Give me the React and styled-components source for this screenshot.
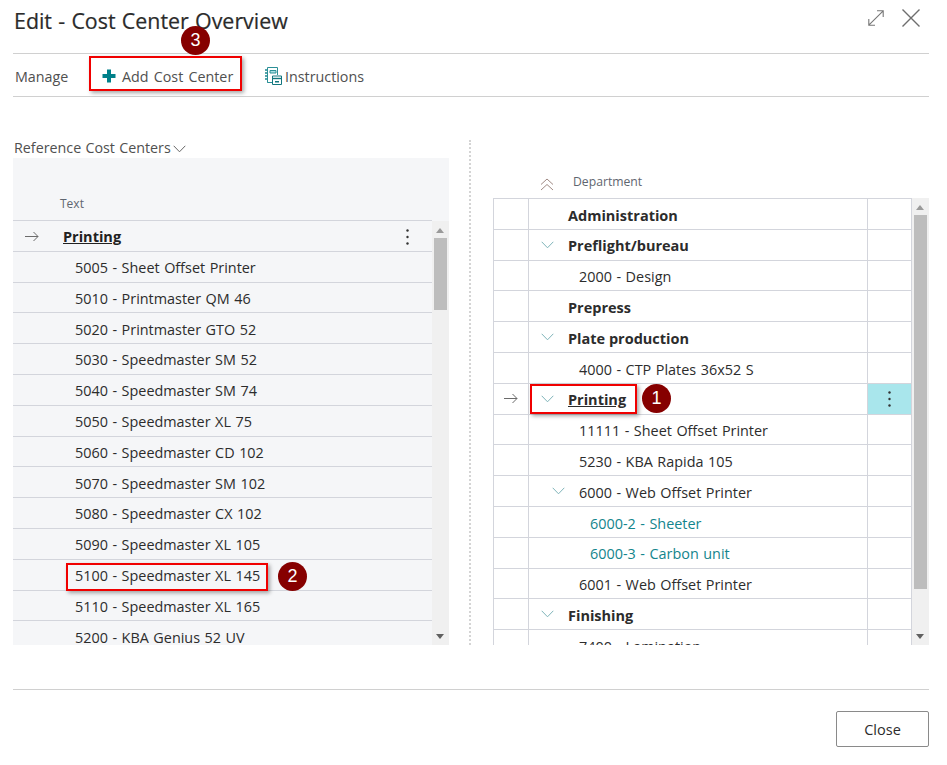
import React from "react";
import styled, { createGlobalStyle } from "styled-components";

const leftRows = [
  "5005 - Sheet Offset Printer",
  "5010 - Printmaster QM 46",
  "5020 - Printmaster GTO 52",
  "5030 - Speedmaster SM 52",
  "5040 - Speedmaster SM 74",
  "5050 - Speedmaster XL 75",
  "5060 - Speedmaster CD 102",
  "5070 - Speedmaster SM 102",
  "5080 - Speedmaster CX 102",
  "5090 - Speedmaster XL 105",
  "5100 - Speedmaster XL 145",
  "5110 - Speedmaster XL 165",
  "5200 - KBA Genius 52 UV",
];

const treeRows = [
  { text: "Administration", level: 0, bold: true },
  { text: "Preflight/bureau", level: 0, bold: true, open: true },
  { text: "2000 - Design", level: 1 },
  { text: "Prepress", level: 0, bold: true },
  { text: "Plate production", level: 0, bold: true, open: true },
  { text: "4000 - CTP Plates 36x52 S", level: 1 },
  { text: "Printing", level: 0, bold: true, open: true, current: true },
  { text: "11111 - Sheet Offset Printer", level: 1 },
  { text: "5230 - KBA Rapida 105", level: 1 },
  { text: "6000 - Web Offset Printer", level: 1, open: true },
  { text: "6000-2 - Sheeter", level: 2, teal: true },
  { text: "6000-3 - Carbon unit", level: 2, teal: true },
  { text: "6001 - Web Offset Printer", level: 1 },
  { text: "Finishing", level: 0, bold: true, open: true },
  { text: "7400 - Lamination", level: 1 },
];

const ChevronDown = ({ color = "#7fb4b9" }) => (
  <svg width="13" height="8" viewBox="0 0 13 8" fill="none">
    <path d="M0.7 0.8 L6.5 6.8 L12.3 0.8" stroke={color} strokeWidth="1" />
  </svg>
);

const DoubleUp = () => (
  <svg width="14" height="13" viewBox="0 0 14 13" fill="none">
    <path d="M1 6.5 L7 1 L13 6.5 M1 12 L7 6.5 L13 12" stroke="#a08a84" strokeWidth="1" />
  </svg>
);

const Arrow = () => (
  <svg width="14" height="11" viewBox="0 0 14 11" fill="none">
    <path d="M0 5.5 H13 M8.5 1 L13 5.5 L8.5 10" stroke="#6b6b6b" strokeWidth="1" />
  </svg>
);

const Kebab = () => (
  <svg width="3" height="16" viewBox="0 0 3 16">
    <circle cx="1.5" cy="1.5" r="1.2" fill="#333" />
    <circle cx="1.5" cy="8" r="1.2" fill="#333" />
    <circle cx="1.5" cy="14.5" r="1.2" fill="#333" />
  </svg>
);

const PlusIcon = () => (
  <svg width="14" height="14" viewBox="0 0 14 14">
    <path d="M5 0.5 H9 V5 H13.5 V9 H9 V13.5 H5 V9 H0.5 V5 H5 Z" fill="#00808a" />
  </svg>
);

const InstructionsIcon = () => (
  <svg width="17" height="18" viewBox="0 0 17 18" fill="none">
    <path d="M2.5 0.5 H12.5 V8 M7 15.5 H2.5 Z M2.5 0.5 V15.5" stroke="#2b8f96" strokeWidth="1" />
    <path d="M1 2 V4 M1 5 V7 M1 8 V10 M1 11 V13" stroke="#2b8f96" strokeWidth="1.6" />
    <path d="M5 3.5 H11 V6 H5 Z" fill="#a9dfe3" stroke="#2b8f96" strokeWidth="1" />
    <path d="M7.5 9 H16.5 V17.5 H7.5 Z" fill="#fff" stroke="#12767e" strokeWidth="1" />
    <path d="M7.5 11.5 H16.5" stroke="#12767e" strokeWidth="1.4" />
    <path d="M10 14 H14 V15.5 H10 Z" fill="#12767e" />
  </svg>
);

const ExpandIcon = () => (
  <svg width="16" height="16" viewBox="0 0 16 16" fill="none">
    <path d="M0.8 15.2 L15.2 0.8 M9 0.8 H15.2 V7 M0.8 9 V15.2 H7" stroke="#777" strokeWidth="1.1" />
  </svg>
);

const CloseIcon = () => (
  <svg width="18" height="18" viewBox="0 0 18 18" fill="none">
    <path d="M0.5 0.5 L17.5 17.5 M17.5 0.5 L0.5 17.5" stroke="#6e6e6e" strokeWidth="1.4" />
  </svg>
);

function ScrollBar({ $offset }) {
  return (
    <Track $offset={$offset}>
      <TrackUp />
      <Thumb $height={$offset ? "72px" : "374px"} />
      <TrackDown />
    </Track>
  );
}

function App() {
  return (
    <>
      <GlobalStyle />
      <Page>
        <Header>
          <Title>Edit - Cost Center Overview</Title>
          <HeaderIcons>
            <ExpandIcon />
            <CloseIcon />
          </HeaderIcons>
        </Header>

        <Toolbar>
          <ToolLabel>Manage</ToolLabel>
          <ToolButton $width="152px">
            <PlusIcon />
            Add Cost Center
          </ToolButton>
          <ToolButton $gap="3px">
            <InstructionsIcon />
            Instructions
          </ToolButton>
        </Toolbar>

        <Content>
          <LeftColumn>
            <GroupCaption>
              Reference Cost Centers
              <ChevronDown color="#666" />
            </GroupCaption>
            <LeftPanel>
              <LeftList>
                <LeftHead>Text</LeftHead>
                <LeftRow>
                  <ArrowSlot>
                    <Arrow />
                  </ArrowSlot>
                  <CurrentText>Printing</CurrentText>
                  <LeftKebab>
                    <Kebab />
                  </LeftKebab>
                </LeftRow>
                {leftRows.map((text) => (
                  <LeftRow key={text}>
                    <LeftText>{text}</LeftText>
                  </LeftRow>
                ))}
              </LeftList>
              <ScrollBar $offset="63px" />
            </LeftPanel>
          </LeftColumn>

          <Divider />

          <RightColumn>
            <TreeHead>
              <CollapseSlot>
                <DoubleUp />
              </CollapseSlot>
              <TreeHeadText>Department</TreeHeadText>
            </TreeHead>
            <TreeFrame>
              <Tree>
                {treeRows.map((row) => (
                  <TreeRow key={row.text}>
                    <MarkerCell>{row.current && <Arrow />}</MarkerCell>
                    <NameCell $level={row.level}>
                      <ChevronSlot>{row.open && <ChevronDown />}</ChevronSlot>
                      <TreeText $bold={row.bold} $teal={row.teal} $current={row.current}>
                        {row.text}
                      </TreeText>
                    </NameCell>
                    <ActionCell $active={row.current}>{row.current && <Kebab />}</ActionCell>
                  </TreeRow>
                ))}
              </Tree>
              <ScrollBar />
            </TreeFrame>
          </RightColumn>
        </Content>

        <Footer>
          <CloseButton>Close</CloseButton>
        </Footer>

        <RedBox $x="89px" $y="56px" $w="153px" $h="35px" />
        <Badge $x="181px" $y="26px">3</Badge>
        <RedBox $x="530px" $y="384px" $w="107px" $h="30px" />
        <Badge $x="642px" $y="384px">1</Badge>
        <RedBox $x="66px" $y="563px" $w="202px" $h="28px" />
        <Badge $x="278px" $y="562px">2</Badge>
      </Page>
    </>
  );
}

export default App;

const GlobalStyle = createGlobalStyle`
  html, body {
    margin: 0;
    padding: 0;
    background: #fff;
  }
  body {
    font-family: "Open Sans", "Noto Sans", sans-serif;
    color: #212121;
  }
`;

const Page = styled.div`
  position: relative;
  width: 947px;
  height: 765px;
  padding: 0 18px 0 13px;
  box-sizing: border-box;
  overflow: hidden;
`;

const Header = styled.header`
  display: flex;
  justify-content: space-between;
  align-items: center;
  height: 54px;
  padding-bottom: 13px;
  box-sizing: border-box;
  border-bottom: 1px solid #d0d0d0;
`;

const Title = styled.h1`
  margin: 0 0 0 1px;
  font-size: 21.4px;
  font-weight: 400;
  word-spacing: 0.7px;
  color: #2b2b2b;
  -webkit-text-stroke: 0.2px #2b2b2b;
`;

const HeaderIcons = styled.div`
  display: flex;
  align-items: center;
  gap: 18px;
  margin: 0 9px 4px 0;
`;

const Toolbar = styled.nav`
  display: flex;
  align-items: center;
  height: 43px;
  padding-top: 2px;
  box-sizing: border-box;
  border-bottom: 1px solid #d0d0d0;
  font-size: 14.3px;
  word-spacing: 1.5px;
  color: #505050;
`;

const ToolLabel = styled.span`
  width: 77px;
  padding-left: 2px;
  box-sizing: border-box;
`;

const ToolButton = styled.span`
  display: flex;
  align-items: center;
  gap: ${({ $gap }) => $gap || "6px"};
  width: ${({ $width }) => $width || "auto"};
  padding-left: 12px;
  margin-right: 11px;
  box-sizing: border-box;
  white-space: nowrap;
`;

const Content = styled.div`
  display: flex;
  height: 593px;
  padding-top: 43px;
  box-sizing: border-box;
  border-bottom: 1px solid #d0d0d0;
`;

const LeftColumn = styled.section`
  width: 436px;
  flex-shrink: 0;
`;

const GroupCaption = styled.div`
  display: flex;
  align-items: center;
  gap: 2px;
  height: 18px;
  padding: 0 0 3px 1px;
  box-sizing: border-box;
  font-size: 14.3px;
  word-spacing: 0.5px;
  color: #505050;

  svg {
    margin-top: 3px;
  }
`;

const LeftPanel = styled.div`
  display: flex;
  height: 487px;
  background: #f5f6f8;
  overflow: hidden;
`;

const LeftList = styled.div`
  flex: 1;
  min-width: 0;
`;

const LeftHead = styled.div`
  display: flex;
  align-items: flex-end;
  height: 63px;
  padding: 0 0 8px 47px;
  box-sizing: border-box;
  font-size: 12px;
  color: #5f6670;
  border-bottom: 1px solid #d3d5dc;
`;

const LeftRow = styled.div`
  display: flex;
  align-items: center;
  height: 30.8px;
  padding-top: 1.5px;
  box-sizing: border-box;
  border-bottom: 1px solid #d3d5dc;
`;

const ArrowSlot = styled.span`
  display: flex;
  width: 50px;
  padding-left: 12px;
  box-sizing: border-box;
`;

const CurrentText = styled.span`
  font-size: 14.5px;
  font-weight: 700;
  text-decoration: underline;
`;

const LeftKebab = styled.span`
  display: flex;
  margin-left: auto;
  margin-right: 23px;
`;

const LeftText = styled.span`
  padding-left: 62px;
  font-size: 14.4px;
  word-spacing: 0.8px;
  color: #2c2c2c;
  white-space: nowrap;
`;

const Track = styled.div`
  position: relative;
  width: 17px;
  flex-shrink: 0;
  margin-top: ${({ $offset }) => $offset || 0};
  background: #f0f0f0;
`;

const Thumb = styled.div`
  position: absolute;
  top: 17px;
  left: 2px;
  width: 13px;
  height: ${({ $height }) => $height};
  background: #bdbdbd;
`;

const TrackUp = styled.span`
  position: absolute;
  top: 7px;
  left: 4px;
  border: 4px solid transparent;
  border-top: 0;
  border-bottom: 5px solid #9a9a9a;
`;

const TrackDown = styled.span`
  position: absolute;
  bottom: 6px;
  left: 4px;
  border: 4px solid transparent;
  border-bottom: 0;
  border-top: 5px solid #606060;
`;

const Divider = styled.div`
  width: 0;
  margin: 0 22px 0 20px;
  height: 505px;
  border-left: 2px dotted #d4d4d4;
`;

const RightColumn = styled.section`
  flex: 1;
  min-width: 0;
`;

const TreeHead = styled.div`
  display: flex;
  align-items: center;
  height: 58px;
  padding-top: 24px;
  box-sizing: border-box;
  font-size: 12.2px;
  color: #5f6670;
`;

const CollapseSlot = styled.span`
  display: flex;
  width: 80px;
  padding: 6px 0 0 47px;
  box-sizing: border-box;
`;

const TreeHeadText = styled.span``;

const TreeFrame = styled.div`
  display: flex;
  height: 447px;
  overflow: hidden;
`;

const Tree = styled.div`
  flex: 1;
  min-width: 0;
  border-top: 1px solid #d3d5dc;
  border-left: 1px solid #d3d5dc;
  border-right: 1px solid #d3d5dc;
`;

const TreeRow = styled.div`
  display: flex;
  height: 30.8px;
  box-sizing: border-box;
  border-bottom: 1px solid #d3d5dc;
`;

const MarkerCell = styled.div`
  display: flex;
  align-items: center;
  justify-content: center;
  width: 35px;
  flex-shrink: 0;
  box-sizing: border-box;
  border-right: 1px solid #d3d5dc;
`;

const NameCell = styled.div`
  display: flex;
  align-items: center;
  flex: 1;
  min-width: 0;
  padding-left: ${({ $level }) => 12 + $level * 11}px;
  box-sizing: border-box;
  border-right: 1px solid #d3d5dc;
`;

const ChevronSlot = styled.span`
  display: flex;
  width: 27px;
  flex-shrink: 0;
`;

const TreeText = styled.span`
  padding-top: 2.5px;
  font-size: ${({ $bold }) => ($bold ? "14.5px" : "14.4px")};
  word-spacing: ${({ $bold }) => ($bold ? "0" : "0.8px")};
  font-weight: ${({ $bold }) => ($bold ? 700 : 400)};
  color: ${({ $teal }) => ($teal ? "#13858d" : "#2c2c2c")};
  text-decoration: ${({ $current }) => ($current ? "underline" : "none")};
  white-space: nowrap;
`;

const ActionCell = styled.div`
  display: flex;
  align-items: center;
  justify-content: center;
  width: 43px;
  flex-shrink: 0;
  background: ${({ $active }) => ($active ? "#a9e6ec" : "transparent")};
`;

const Footer = styled.footer`
  display: flex;
  justify-content: flex-end;
  padding-top: 21px;
`;

const CloseButton = styled.button`
  width: 93px;
  height: 36px;
  padding: 0;
  background: #fff;
  border: 1px solid #8a8a8a;
  border-radius: 2px;
  font-family: inherit;
  font-size: 14.5px;
  color: #2c2c2c;
`;

const RedBox = styled.div`
  position: absolute;
  left: ${({ $x }) => $x};
  top: ${({ $y }) => $y};
  width: ${({ $w }) => $w};
  height: ${({ $h }) => $h};
  box-sizing: border-box;
  border: 2px solid #f00000;
  box-shadow: 2px 2px 4px rgba(0, 0, 0, 0.35);
`;

const Badge = styled.div`
  position: absolute;
  left: ${({ $x }) => $x};
  top: ${({ $y }) => $y};
  display: flex;
  align-items: center;
  justify-content: center;
  width: 29px;
  height: 29px;
  border-radius: 50%;
  background: #860000;
  color: #fff;
  font-family: "Liberation Sans", sans-serif;
  font-size: 18px;
`;
